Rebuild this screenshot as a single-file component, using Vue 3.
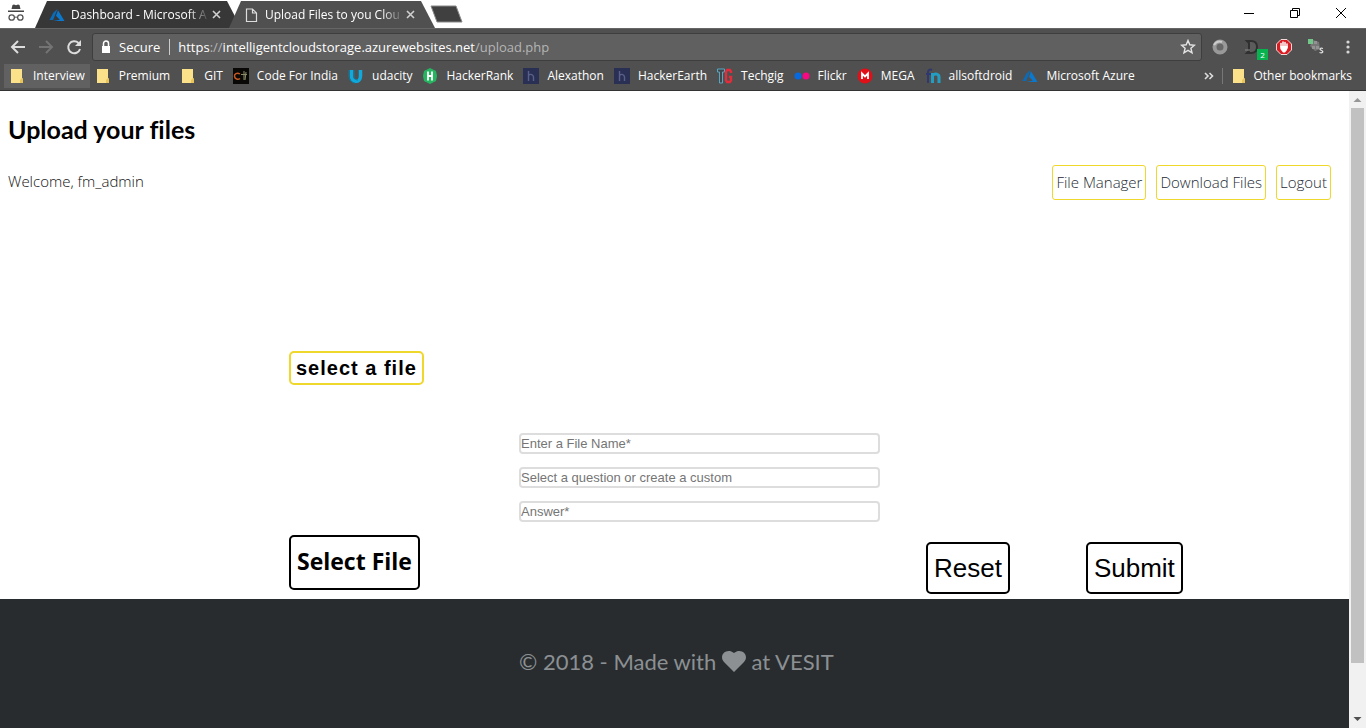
<script setup>
import { ref } from 'vue'

const bookmarks = [
  { label: 'Interview', icon: 'folder', active: true },
  { label: 'Premium', icon: 'folder' },
  { label: 'GIT', icon: 'folder' },
  { label: 'Code For India', icon: 'cfi' },
  { label: 'udacity', icon: 'udacity' },
  { label: 'HackerRank', icon: 'rank' },
  { label: 'Alexathon', icon: 'earth' },
  { label: 'HackerEarth', icon: 'earth' },
  { label: 'Techgig', icon: 'techgig' },
  { label: 'Flickr', icon: 'flickr' },
  { label: 'MEGA', icon: 'mega' },
  { label: 'allsoftdroid', icon: 'allsoft' },
  { label: 'Microsoft Azure', icon: 'azure' }
]

const fileName = ref('')
const question = ref('')
const answer = ref('')
</script>

<template>
  <div class="window">
    <svg class="defs" aria-hidden="true">
      <symbol id="folder" viewBox="0 0 16 16"><path d="M2 1h11v9l1 1v4H2z" fill="#fbe28a" /><path d="M13 10l1 1v4h-3v-3z" fill="#e9c559" /></symbol>
      <symbol id="azure" viewBox="0 0 16 16"><path d="M8.500 2L4.300 5.700.5 13h3.600z" fill="#0a6cb8" /><path d="M9 3.200L7 8.700l3.800 4L4.300 14H15.500z" fill="#0a78cc" /></symbol>
      <symbol id="cfi" viewBox="0 0 16 16"><path d="M0 0h16v16H0z" fill="#090807" /><path d="M7 6C4 4 1 6 1.500 8.500S5 12 7 10.500" fill="none" stroke="#c65a22" stroke-width="1.500" /><path d="M11 3v9M8 6.500h6M13 4l-1 8" fill="none" stroke="#8b8c67" /></symbol>
      <symbol id="udacity" viewBox="0 0 16 16"><path d="M3.500 2v6c0 7 9 7 9 0V2" fill="none" stroke="#10a9dc" stroke-width="3.500" /><path d="M1 2v6c0 4 3 7 6 7M6 2v6c0 3 2 4 4 4" fill="none" stroke="#0c7ba4" /></symbol>
      <symbol id="rank" viewBox="0 0 16 16"><path d="M8 0l6 3 1 5-1 5-6 3-6-3-1-5 1-5z" fill="#27b460" /><path d="M6 3.500v9M10 3.500v9M6 8h4" stroke="#fff" stroke-width="1.800" /></symbol>
      <symbol id="earth" viewBox="0 0 16 16"><path d="M0 0h16v16H0z" fill="#2a3054" /><path d="M5.500 3v10M5.500 7.500c2-2 5-1 5 1.500v4" fill="none" stroke="#59608a" stroke-width="1.400" /></symbol>
      <symbol id="techgig" viewBox="0 0 16 16"><path d="M.5 1h7v3H5.500v11h-3V4h-2z" fill="#3d474c" stroke="#58a7c2" /><path d="M14 5V3.500L13 2h-3L9 3.500v9l1 1.500h3l1-1.500V9h-2" fill="none" stroke="#e42c3a" stroke-width="2.400" /></symbol>
      <symbol id="flickr" viewBox="0 0 16 16"><circle cx="4" cy="8" r="3.500" fill="#0769df" /><circle cx="12" cy="8" r="3.500" fill="#f80983" /></symbol>
      <symbol id="mega" viewBox="0 0 16 16"><circle cx="8" cy="8" r="7.500" fill="#df1018" /><path d="M5 11V5.500L8 8.500l3-3V11" fill="none" stroke="#fff" stroke-width="1.800" /></symbol>
      <symbol id="allsoft" viewBox="0 0 16 16"><path d="M3 15V4c0-2 2-3 4-2M1 6h6" fill="none" stroke="#30386e" stroke-width="2" /><path d="M7.500 15V5M8 7c2-2 6-1 6 2v6" fill="none" stroke="#239dc2" stroke-width="3" /></symbol>
    </svg>

    <header class="browser">
      <div class="tabstrip">
        <svg class="incognito" viewBox="0 0 18 18" aria-hidden="true"><path d="M4.500 5l1-4L7 .5l2 .8 2-.8 1.500.5 1 4zM1 6.500h16v1.500H1z" fill="#454545" /><circle cx="4.700" cy="13.500" r="2.700" fill="none" stroke="#555" stroke-width="1.300" /><circle cx="13.300" cy="13.500" r="2.700" fill="none" stroke="#555" stroke-width="1.300" /><path d="M7.400 13.500q1.600-1 3.200 0" fill="none" stroke="#555" /></svg>
        <div class="tab">
          <svg class="icon" aria-hidden="true"><use href="#azure" /></svg>
          <span class="tab-title">Dashboard - Microsoft A</span>
          <button class="tab-close" aria-label="Close Dashboard tab"><svg viewBox="0 0 9 9"><path d="M1 1l7 7M8 1L1 8" /></svg></button>
        </div>
        <div class="tab current">
          <svg class="icon" viewBox="0 0 16 16" aria-hidden="true"><path d="M3.500 2h6l4 4v8.500h-10zM9.500 2v4h4" fill="none" stroke="#ddd" stroke-width="1.200" /></svg>
          <span class="tab-title">Upload Files to you Clou</span>
          <button class="tab-close" aria-label="Close Upload tab"><svg viewBox="0 0 9 9"><path d="M1 1l7 7M8 1L1 8" /></svg></button>
        </div>
        <button class="new-tab" aria-label="New tab"><svg viewBox="0 0 34 18"><path d="M2 1h25l6 16H8z" fill="#404040" stroke="#888" /></svg></button>
        <div class="window-buttons">
          <button aria-label="Minimize"><svg viewBox="0 0 12 12"><path d="M1 6.500h10" /></svg></button>
          <button aria-label="Restore"><svg viewBox="0 0 12 12"><path d="M1.500 3.500h7v7h-7zM3.500 3.500v-2h7v7h-2" /></svg></button>
          <button aria-label="Close window"><svg viewBox="0 0 12 12"><path d="M1 1l10 10M11 1L1 11" /></svg></button>
        </div>
      </div>

      <div class="toolbar">
        <button class="tool" aria-label="Back"><svg viewBox="0 0 16 16"><path d="M15 8H2M8 2L2 8l6 6" fill="none" stroke="#ddd" stroke-width="2" /></svg></button>
        <button class="tool" aria-label="Forward"><svg viewBox="0 0 16 16"><path d="M1 8h13M8 2l6 6-6 6" fill="none" stroke="#747474" stroke-width="2" /></svg></button>
        <button class="tool" aria-label="Reload"><svg viewBox="0 0 16 16"><path d="M12.500 4A6 6 0 1 0 14 10" fill="none" stroke="#ddd" stroke-width="2" /><path d="M15 1v6H9z" fill="#ddd" /></svg></button>
        <div class="address">
          <svg class="lock" viewBox="0 0 10 14" aria-hidden="true"><path d="M1 6h8v7H1z" fill="#fff" /><path d="M2.500 6V3.500a2.500 2.500 0 0 1 5 0V6" fill="none" stroke="#fff" stroke-width="1.500" /></svg>
          <span class="secure">Secure</span>
          <span class="url">https<i>://</i>intelligentcloudstorage.azurewebsites.net<i>/upload.php</i></span>
          <button class="tool" aria-label="Bookmark this page"><svg viewBox="0 0 16 16"><path d="M8 1.500l1.800 4.300 4.700.4-3.600 3 1.100 4.600L8 11.300l-4 2.500 1.100-4.600-3.600-3 4.700-.4z" fill="none" stroke="#e4e4e4" stroke-width="1.400" /></svg></button>
        </div>
        <div class="extensions">
          <button class="tool" aria-label="Circle extension"><svg viewBox="0 0 16 16"><circle cx="8" cy="8" r="5.500" fill="#686868" stroke="#999" stroke-width="4" /><path d="M2 6q3-5 8-3" fill="none" stroke="#ccc" stroke-width="2" /></svg></button>
          <button class="tool badged" aria-label="D extension"><svg viewBox="0 0 16 16"><path d="M3 2h4q6 0 6 6t-6 6H3l2-2V4z" fill="#5c5c5c" stroke="#303030" stroke-width="2" /><path d="M1 11h5" stroke="#888" /></svg><span class="badge">2</span></button>
          <button class="tool" aria-label="Ad blocker"><svg viewBox="0 0 16 16"><path d="M5 .5h6L15.500 5v6L11 15.500H5L.5 11V5z" fill="#d91b22" stroke="#f2d8d8" /><path d="M5 8V4.500M7 8V3M9 8V3.500M11 9V5" stroke="#fff" stroke-width="1.500" stroke-linecap="round" /><path d="M4.300 7h7.500L11 11l-2 2.500H7L4.300 10z" fill="#fff" /></svg></button>
          <button class="tool" aria-label="S extension"><svg viewBox="0 0 16 16"><path d="M5 1l6 2 1 7-5 2-5-5z" fill="#777" /><path d="M0 0h5v5H0z" fill="#73c68a" /><path d="M6 2h3v3H6zM8 7h3v3H8zM4 7h3v3H4z" fill="#929292" /><path d="M15 9.500c-3-1-4 1-1.500 2s1 3-2 2" fill="none" stroke="#ddd" stroke-width="1.300" /></svg></button>
          <button class="tool" aria-label="Menu"><svg viewBox="0 0 16 16" fill="#d7d7d7"><circle cx="8" cy="3" r="1.600" /><circle cx="8" cy="8" r="1.600" /><circle cx="8" cy="13" r="1.600" /></svg></button>
        </div>
      </div>

      <nav class="bookmarks" aria-label="Bookmarks">
        <a v-for="b in bookmarks" :key="b.label" href="#" :class="{ active: b.active }"><svg class="icon" aria-hidden="true"><use :href="'#' + b.icon" /></svg>{{ b.label }}</a>
        <button class="more" aria-label="More bookmarks"><svg viewBox="0 0 10 8"><path d="M1 1l3 3-3 3M5.500 1l3 3-3 3" /></svg></button>
        <a class="other" href="#"><svg class="icon" aria-hidden="true"><use href="#folder" /></svg>Other bookmarks</a>
      </nav>
    </header>

    <div class="viewport">
      <div class="page">
        <h2>Upload your files</h2>
        <div class="account">
          <span>Welcome, fm_admin</span>
          <nav class="links" aria-label="Account">
            <a href="#">File Manager</a>
            <a href="#">Download Files</a>
            <a href="#">Logout</a>
          </nav>
        </div>

        <form class="upload columns" @submit.prevent>
          <button type="button" class="picker">select a file</button>
          <div class="fields">
            <input v-model="fileName" type="text" aria-label="File name" placeholder="Enter a File Name*" />
            <input v-model="question" type="text" aria-label="Question" placeholder="Select a question or create a custom" />
            <input v-model="answer" type="text" aria-label="Answer" placeholder="Answer*" />
          </div>
          <button type="button" class="outlined select">Select File</button>
          <div class="actions">
            <button type="reset" class="outlined">Reset</button>
            <button type="submit" class="outlined">Submit</button>
          </div>
        </form>

        <footer class="columns">
          <p>© 2018 - Made with <svg class="heart" viewBox="0 0 24 22" role="img" aria-label="love"><path d="M12 22L2 12C-4 5 5-3 12 3c7-6 16 2 10 9z" fill="currentColor" /></svg> at VESIT</p>
        </footer>
      </div>
      <div class="scrollbar" aria-hidden="true">
        <svg viewBox="0 0 17 17"><path d="M4.500 11h8l-4-4z" fill="#969696" /></svg>
        <div class="track"><div class="thumb"></div></div>
        <svg viewBox="0 0 17 17"><path d="M4.500 6h8l-4 4z" fill="#505050" /></svg>
      </div>
    </div>
  </div>
</template>

<style>
body {
  margin: 0;
  overflow: hidden;
}
</style>

<style scoped>
* {
  box-sizing: border-box;
}
.window {
  display: flex;
  flex-direction: column;
  height: 100vh;
  background: #fff;
}
.defs {
  display: none;
}
button {
  padding: 0;
  border: 0;
  background: none;
  font: inherit;
  color: inherit;
}
a {
  color: inherit;
  text-decoration: none;
}
svg {
  display: block;
  flex: none;
}
.icon {
  width: 16px;
  height: 16px;
}

.browser {
  font: 12px/16px "Open Sans", "Noto Sans", sans-serif;
  color: #fff;
}
.tabstrip {
  display: flex;
  height: 28px;
}
.incognito {
  width: 18px;
  height: 18px;
  margin: 4px 10px 0 7px;
}
.tab {
  display: flex;
  align-items: center;
  width: 206px;
  margin-top: 1px;
  padding: 0 20px 0 14px;
  background: #373737;
  clip-path: polygon(12px 0, 192px 0, 100% 100%, 0 100%);
}
.tab.current {
  margin-left: -12px;
  background: #505050;
}
.tab-title {
  flex: 1;
  margin: 0 2px 0 6px;
  overflow: hidden;
  white-space: nowrap;
  mask-image: linear-gradient(to right, #000 84%, transparent);
}
.tab-close svg {
  width: 9px;
  height: 9px;
  stroke: #d0d0d0;
  stroke-width: 1.6;
}
.new-tab {
  margin-left: -6px;
}
.new-tab svg {
  width: 34px;
  height: 18px;
}
.window-buttons {
  display: flex;
  margin-left: auto;
  padding-right: 2px;
}
.window-buttons button {
  display: grid;
  place-items: center;
  width: 46px;
  height: 26px;
}
.window-buttons svg {
  width: 12px;
  height: 12px;
  fill: none;
  stroke: #000;
  stroke-width: 1;
}
.toolbar {
  display: flex;
  align-items: center;
  gap: 12px;
  height: 33px;
  padding: 4px 10px 0;
  border-top: 1px solid #666;
  background: #505050;
}
.tool svg {
  width: 16px;
  height: 16px;
}
.address {
  display: flex;
  flex: 1;
  align-items: center;
  height: 28px;
  margin: 0 -2px;
  padding: 0 5px 0 8px;
  border: 1px solid #3e3e3e;
  border-radius: 3px;
  background: #606060;
  font-size: 13px;
}
.lock {
  width: 10px;
  height: 14px;
  margin-right: 8px;
}
.secure {
  padding-right: 9px;
  border-right: 1px solid #ccc;
}
.url {
  flex: 1;
  padding-left: 8px;
}
.url i {
  color: #b5b5b5;
  font-style: normal;
}
.extensions {
  display: flex;
  gap: 16px;
}
.badged {
  position: relative;
}
.badge {
  position: absolute;
  right: -8px;
  bottom: -5px;
  width: 11px;
  height: 11px;
  background: #08b34f;
  font-size: 8px;
  line-height: 11px;
  text-align: center;
}
.bookmarks {
  display: flex;
  align-items: center;
  height: 30px;
  padding: 0 9px 0 4px;
  border-bottom: 1px solid #333;
  background: #505050;
  white-space: nowrap;
}
.bookmarks a {
  display: flex;
  gap: 8px;
  padding: 4px 5px;
}
.bookmarks a.active {
  background: #616161;
}
.more {
  margin-left: auto;
  padding-right: 8px;
}
.more svg {
  width: 10px;
  height: 8px;
  fill: none;
  stroke: #ddd;
  stroke-width: 1.6;
}
.bookmarks .other {
  gap: 6px;
  padding: 0 5px 0 8px;
  border-left: 1px solid #777;
}

.viewport {
  display: flex;
  flex: 1;
  min-height: 0;
}
.page {
  display: flex;
  flex: 1;
  flex-direction: column;
  color: #111;
  font: 15px/24px "Open Sans", "Noto Sans", sans-serif;
}
h2 {
  margin: 23px 8px 21px;
  color: #000;
  font: bold 25px/30px Lato, sans-serif;
  font-variant-ligatures: none;
}
.account {
  display: flex;
  align-items: center;
  justify-content: space-between;
  padding: 0 18px 0 8px;
  font-weight: 300;
}
.account > span {
  padding-bottom: 3px;
}
.links {
  display: flex;
  gap: 10px;
}
.links a {
  padding: 4px 3px 5px;
  border: 1px solid #efd72b;
  border-radius: 3px;
  color: #1c2a33;
}
.columns {
  display: grid;
  grid-template-columns: 289fr 230fr 361fr 469fr;
}
.upload {
  padding-top: 151px;
  padding-bottom: 5px;
}
.picker {
  grid-column: 2;
  justify-self: start;
  height: 34px;
  padding: 0 5px;
  border: 2px solid #efd72b;
  border-radius: 5px;
  color: #000;
  font: bold 20px/24px "Liberation Sans", sans-serif;
  letter-spacing: 1px;
}
.fields {
  display: grid;
  grid-column: 3;
  grid-row: 2;
  gap: 13px;
  margin: 48px 0 13px;
}
.fields input {
  width: 100%;
  height: 21px;
  padding: 0;
  border: 2px solid #ddd;
  border-radius: 4px;
  font: 13px/16px "Liberation Sans", sans-serif;
}
.fields input::placeholder {
  color: #757575;
}
.outlined {
  height: 52px;
  padding: 0 6px;
  border: 2px solid #000;
  border-radius: 5px;
  color: #000;
  font: 26px/30px "Liberation Sans", sans-serif;
}
.select {
  grid-column: 2;
  grid-row: 3;
  justify-self: start;
  height: 55px;
  padding-bottom: 3px;
  font: bold 23px/30px "Open Sans", sans-serif;
}
.actions {
  display: flex;
  grid-column: 4;
  grid-row: 3;
  align-items: flex-end;
  gap: 76px;
  padding-left: 46px;
  margin-top: 7px;
}
footer {
  flex: 1;
  align-content: start;
  padding-top: 47px;
  background: #282c2f;
  color: #8c9093;
}
footer p {
  grid-column: 3 / 5;
  margin: 0;
  font: 22px/32px Lato, sans-serif;
}
.heart {
  display: inline-block;
  width: 24px;
  height: 22px;
  vertical-align: -2px;
}
.scrollbar {
  display: flex;
  flex-direction: column;
  width: 17px;
  background: #f1f1f1;
}
.track {
  flex: 1;
  padding: 0 2px;
}
.thumb {
  height: 92%;
  background: #c1c1c1;
}
</style>
